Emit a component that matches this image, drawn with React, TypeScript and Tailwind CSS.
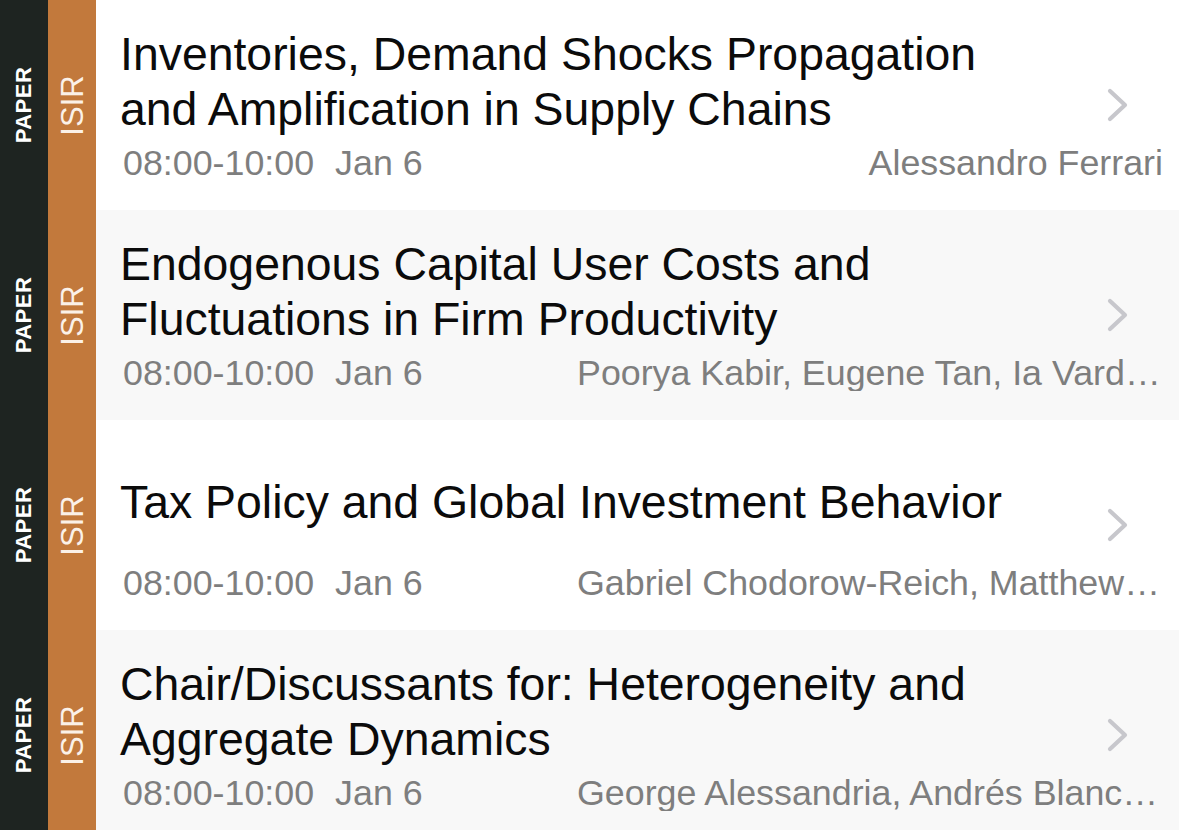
const sessions = [
  {
    title: 'Inventories, Demand Shocks Propagation and Amplification in Supply Chains',
    time: '08:00-10:00',
    date: 'Jan 6',
    authors: 'Alessandro Ferrari',
  },
  {
    title: 'Endogenous Capital User Costs and Fluctuations in Firm Productivity',
    time: '08:00-10:00',
    date: 'Jan 6',
    authors: 'Poorya Kabir, Eugene Tan, Ia Vardishvili',
  },
  {
    title: 'Tax Policy and Global Investment Behavior',
    time: '08:00-10:00',
    date: 'Jan 6',
    authors: 'Gabriel Chodorow-Reich, Matthew Smith, Owen Zidar, Eric Zwick',
  },
  {
    title: 'Chair/Discussants for: Heterogeneity and Aggregate Dynamics',
    time: '08:00-10:00',
    date: 'Jan 6',
    authors: 'George Alessandria, Andrés Blanco, Ricardo Reis',
  },
];

const Chevron = () => (
  <svg width="24" height="36" viewBox="0 0 24 36" fill="none" className="block">
    <path d="M4 4 L19 18 L4 32" stroke="#c7c7cc" strokeWidth="4.2" strokeLinecap="round" strokeLinejoin="round" />
  </svg>
);

const SessionRow = ({ s, alt }: { s: (typeof sessions)[number]; alt: boolean }) => (
  <div className={`flex h-[210px] ${alt ? 'bg-[#f8f8f8]' : 'bg-white'}`}>
    <div className="w-[48px] shrink-0 bg-[#1e2421] flex items-center justify-center">
      <span className="-rotate-90 text-white font-bold text-[22px] leading-none tracking-[0.5px]">PAPER</span>
    </div>
    <div className="w-[48px] shrink-0 bg-[#c2793c] flex items-center justify-center">
      <span className="-rotate-90 text-[#fbf1e8] text-[31px] leading-none">ISIR</span>
    </div>
    <div className="relative flex-1 min-w-0 pl-[24px] pr-[16px] pt-[27px]">
      <div className="h-[110px] flex items-center">
        <div className="max-w-[900px] text-[46.4px] leading-[55px] text-[#0b0b0b]">{s.title}</div>
      </div>
      <div className="mt-[8px] flex items-center text-[35.8px] leading-[36px] text-[#7e7e7e] pl-[3px]">
        <span className="shrink-0">{s.time}</span>
        <span className="shrink-0 ml-[21px]">{s.date}</span>
        <span className="ml-auto w-[586px] truncate text-right">{s.authors}</span>
      </div>
      <div className="absolute right-[49px] top-1/2 -translate-y-1/2">
        <Chevron />
      </div>
    </div>
  </div>
);

export default function App() {
  return (
    <div className="w-[1179px] h-[830px] overflow-hidden bg-white" style={{ fontFamily: '"Liberation Sans", Arial, sans-serif' }}>
      {sessions.map((s, i) => (
        <SessionRow key={i} s={s} alt={i % 2 === 1} />
      ))}
    </div>
  );
}
